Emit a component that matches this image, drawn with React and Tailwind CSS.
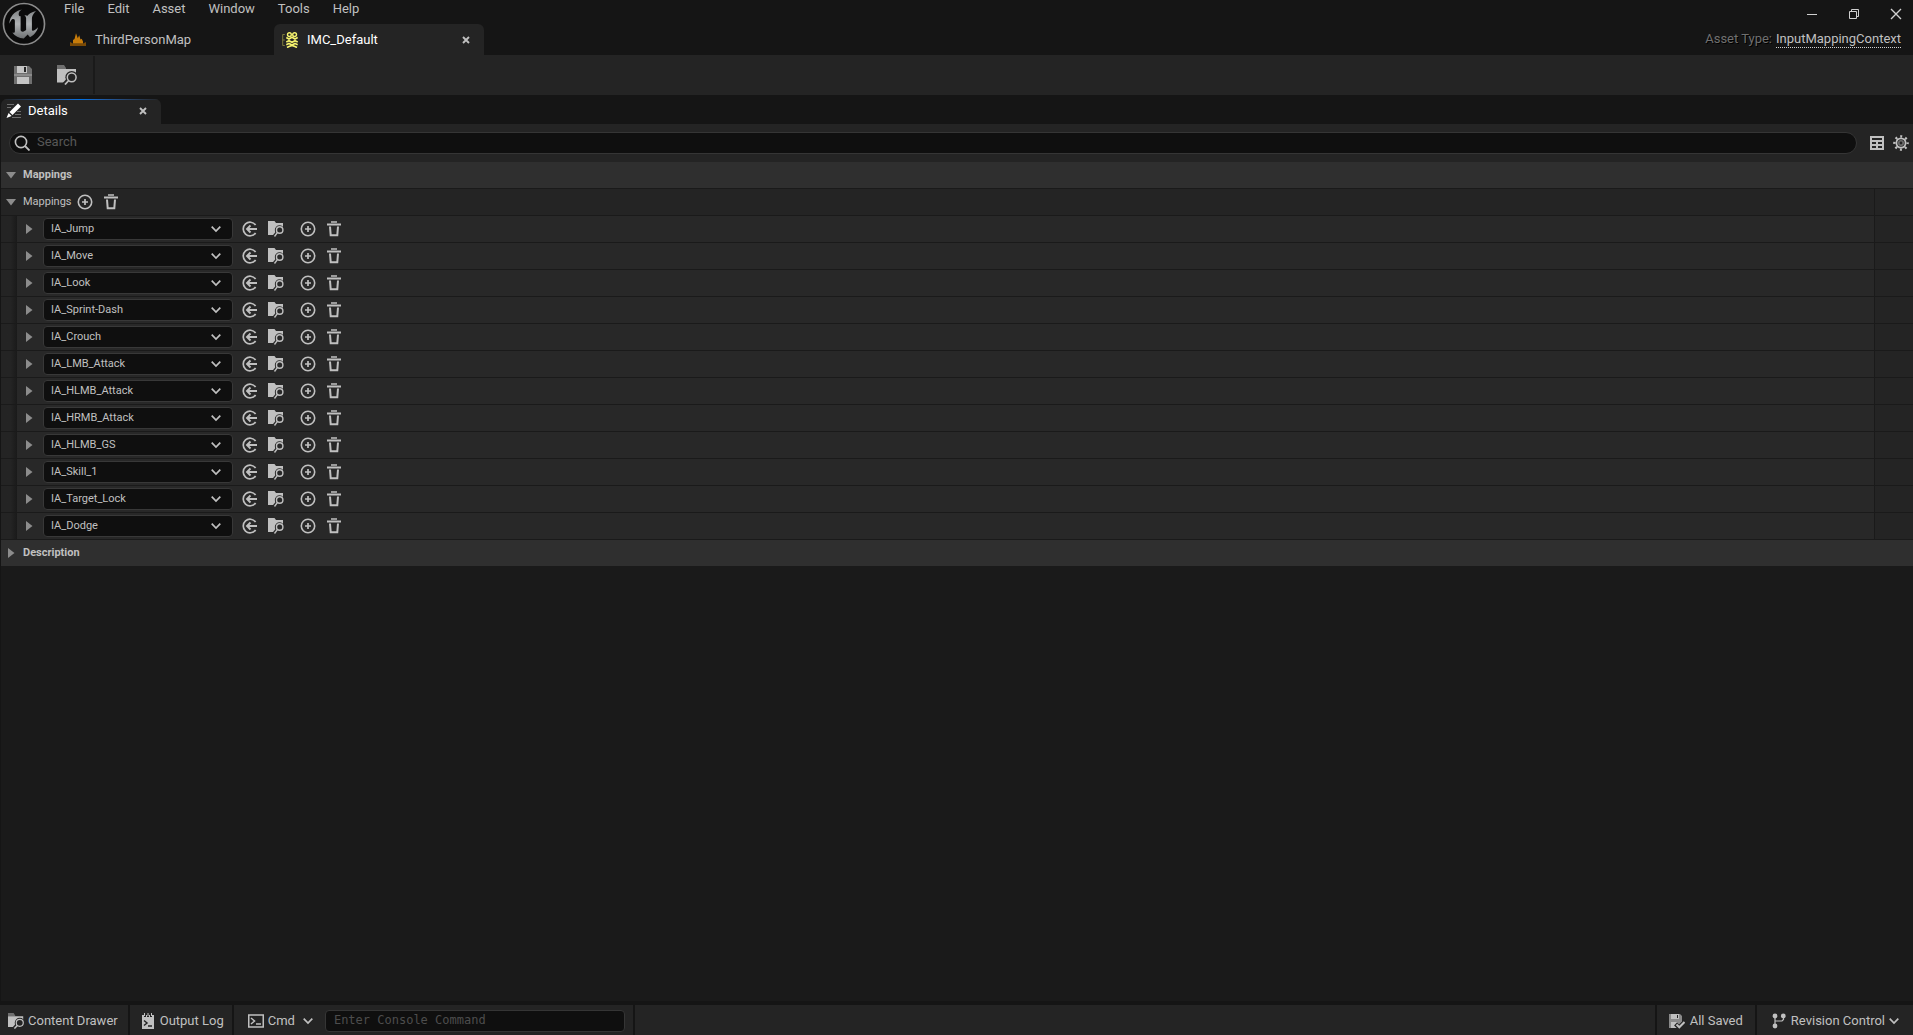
import React from 'react'
import clsx from 'clsx'

const MENUS = ['File', 'Edit', 'Asset', 'Window', 'Tools', 'Help']

const ACTIONS = [
  'IA_Jump',
  'IA_Move',
  'IA_Look',
  'IA_Sprint-Dash',
  'IA_Crouch',
  'IA_LMB_Attack',
  'IA_HLMB_Attack',
  'IA_HRMB_Attack',
  'IA_HLMB_GS',
  'IA_Skill_1',
  'IA_Target_Lock',
  'IA_Dodge',
]

/* ---------- icons ---------- */

function Svg({ size = 16, box = 16, children, className }) {
  return (
    <svg width={size} height={size} viewBox={`0 0 ${box} ${box}`} fill="none" className={clsx('shrink-0', className)} aria-hidden="true">
      {children}
    </svg>
  )
}

function Logo() {
  return (
    <svg width="44" height="44" viewBox="0 0 24 24" className="shrink-0" aria-hidden="true">
      <defs>
        <linearGradient id="logoFill" x1="0" y1="0" x2="0" y2="1">
          <stop offset="0" stopColor="#7d8082" />
          <stop offset="0.5" stopColor="#b0b3b5" />
          <stop offset="1" stopColor="#6d7072" />
        </linearGradient>
      </defs>
      <circle cx="12" cy="12" r="11.2" fill="#0b0b0b" stroke="#8b8b8b" strokeWidth="0.9" />
      <path
        fill="url(#logoFill)"
        transform="translate(-1 -1) scale(1.08)"
        d="M19.13 13.729c-.206.997-1.126 3.557-4.06 4.942l-1.179-1.325-1.988 2a7.338 7.338 0 01-5.804-2.978 2.859 2.859 0 00.65.123c.326.006.678-.114.678-.66v-5.394a.89.89 0 00-1.116-.89c-.92.212-1.656 2.509-1.656 2.509a7.304 7.304 0 012.528-5.597 7.408 7.408 0 013.73-1.721c-1.006.573-1.57 1.507-1.57 2.29 0 1.262.76 1.109.984.923v7.28a1.157 1.157 0 00.148.256 1.075 1.075 0 00.88.445c.76 0 1.747-.868 1.747-.868V9.172c0-.6-.452-1.324-.905-1.572 0 0 .838-.149 1.484.346a5.537 5.537 0 01.387-.425c1.508-1.48 2.929-1.902 4.112-2.112 0 0-2.151 1.69-2.151 3.96 0 1.687.043 5.801.043 5.801.799.771 1.986-.342 3.059-1.441z"
      />
    </svg>
  )
}

function MapIcon() {
  return (
    <Svg>
      <path d="M0 10l3 1.500h10L16 10v4H0z" fill="#7a4a06" />
      <path d="M3 11.500V8l1.500-1L6 1.300l1.800 5 1.400-3 1.300 4.200 1.200-.8L13 9.500v2z" fill="#c77c0a" />
    </Svg>
  )
}

function ContextIcon() {
  return (
    <Svg>
      <path d="M2.800 2.500H.7v11h2.100M.7 8h2.100" stroke="#7d7b3c" strokeWidth="1" />
      <g stroke="#f6f36e" strokeWidth="1.700">
        <path d="M4.300 5.500L7 7l3-1.700L13 7l2.700-1.500" />
        <path d="M4.300 10L7 8.700l3 1.600 3-1.600 2.700 1.300" />
        <path d="M4.300 12.700L7 11.500l3 1.500 3-1.500 2.700 1.200" />
        <path d="M5 15.500l2-1 3-1 3 1 2 1" />
      </g>
      <circle cx="7.400" cy="2.600" r="1.900" stroke="#f6f36e" strokeWidth="1.400" />
      <circle cx="12.600" cy="2.600" r="1.900" stroke="#f6f36e" strokeWidth="1.400" />
    </Svg>
  )
}

function SaveIcon({ size = 18 }) {
  return (
    <Svg size={size} box={18}>
      <path d="M0 0h15l3 3v15H0z" fill="#6f6f6f" />
      <path d="M3 0h10v7H3zM3 11h12v7H3z" fill="#c4c4c4" />
      <path d="M10 1h2v5h-2z" fill="#242424" />
      <path d="M0 8h18v2H0z" fill="#8a8a8a" />
    </Svg>
  )
}

function FolderSearch({ size = 20 }) {
  return (
    <Svg size={size} box={20}>
      <path d="M0 0h7l2 3v1H0z" fill="#6f6f6f" />
      <path d="M0 4h19v9l-9 4.500H0z" fill="#c0c0c0" />
      <circle cx="14.700" cy="12.300" r="6.300" fill="#242424" />
      <path d="M12 14L7 19.500" stroke="#242424" strokeWidth="4" />
      <circle cx="14.700" cy="12.300" r="4.400" stroke="#c0c0c0" strokeWidth="1.500" />
      <path d="M11.700 15.500L8 19.500" stroke="#c0c0c0" strokeWidth="1.800" />
    </Svg>
  )
}

function DetailsIcon() {
  return (
    <Svg>
      <path d="M1 1.500h7M1 4.500h4M11 8.500h4M9 11.500h6M6 14.500h9" stroke="#6e6e6e" />
      <path d="M12 .5l3 3-8.500 8.500-3-3z" fill="#fff" />
      <path d="M2.600 10l3 3L.5 15z" fill="#fff" />
    </Svg>
  )
}

function SearchIcon() {
  return (
    <Svg>
      <circle cx="7" cy="7" r="5.600" stroke="#c0c0c0" strokeWidth="1.600" />
      <path d="M11 11l4.500 4.500" stroke="#c0c0c0" strokeWidth="1.800" />
    </Svg>
  )
}

function TableIcon() {
  return (
    <Svg size={14} box={14}>
      <path fillRule="evenodd" d="M0 0h14v14H0zM2 2v2h10V2zM2 6v2h4V6zM8 6v2h4V6zM2 10v2h4v-2zM8 10v2h4v-2z" fill="#c0c0c0" />
    </Svg>
  )
}

function GearIcon() {
  return (
    <Svg>
      <circle cx="8" cy="8" r="6.600" stroke="#c0c0c0" strokeWidth="2.400" strokeDasharray="2 3.184" strokeDashoffset="1" />
      <circle cx="8" cy="8" r="4.600" stroke="#c0c0c0" strokeWidth="1.800" />
      <circle cx="8" cy="8" r="2.200" stroke="#6f6f6f" strokeWidth="1.600" />
    </Svg>
  )
}

function PlusIcon() {
  return (
    <Svg>
      <circle cx="8" cy="8" r="6.700" stroke="#c0c0c0" strokeWidth="1.600" />
      <path d="M5 8h6M8 5v6" stroke="#c0c0c0" strokeWidth="1.700" />
    </Svg>
  )
}

function TrashIcon() {
  return (
    <Svg>
      <path d="M5 1h6" stroke="#c0c0c0" strokeWidth="1.500" />
      <path d="M1 3.500h14" stroke="#c0c0c0" strokeWidth="2" />
      <path d="M4 5.500l.7 8.800h6.600l.7-8.800" stroke="#c0c0c0" strokeWidth="2" />
    </Svg>
  )
}

function UseIcon() {
  return (
    <Svg>
      <path d="M13.600 4.100a6.800 6.800 0 100 7.800" stroke="#c0c0c0" strokeWidth="1.700" />
      <path d="M15 8H5M8.500 4.500L5 8l3.500 3.500" stroke="#c0c0c0" strokeWidth="1.900" />
    </Svg>
  )
}

function BrowseIcon() {
  return (
    <Svg>
      <path d="M0 0h6.500L8 2h7v6l-7 6H0z" fill="#c0c0c0" />
      <circle cx="11.500" cy="9" r="4.700" fill="#282828" />
      <path d="M10 11l-3.500 4" stroke="#282828" strokeWidth="3.500" />
      <circle cx="11.700" cy="9" r="3.200" stroke="#c0c0c0" strokeWidth="1.400" />
      <path d="M9.500 11.400L6.500 15.500" stroke="#c0c0c0" strokeWidth="1.400" />
    </Svg>
  )
}

function LogIcon() {
  return (
    <Svg>
      <path d="M2 2h12v14H2z" fill="#c0c0c0" />
      <path d="M5 0v4M8 0v4M11 0v4" stroke="#242424" strokeWidth="2" />
      <path d="M4.500 0v3M8 0v3M11.500 0v3" stroke="#c0c0c0" strokeWidth="1" />
      <path d="M4 7.500L7 10l-3 2.500M8 13h4" stroke="#242424" strokeWidth="1.500" />
    </Svg>
  )
}

function CmdIcon() {
  return (
    <Svg>
      <path d="M.75 2h14.500v12H.75z" stroke="#c0c0c0" strokeWidth="1.500" />
      <path d="M3 5l3.500 3L3 11M8 11h5" stroke="#c0c0c0" strokeWidth="1.500" />
    </Svg>
  )
}

function SavedIcon() {
  return (
    <Svg>
      <path d="M0 1h11l2 2v6l-5 6H0z" fill="#8a8a8a" />
      <path d="M2 1h8v5H2zM2 9h6v6H2z" fill="#c0c0c0" />
      <path d="M8 2h1v3H8z" fill="#242424" />
      <path d="M6.500 11l3.500 3.500L16 8.500" stroke="#242424" strokeWidth="4" />
      <path d="M7.500 11.500l2.800 2.800L15.500 9" stroke="#c0c0c0" strokeWidth="2" />
    </Svg>
  )
}

function BranchIcon() {
  return (
    <Svg>
      <path d="M4 3v10M12.500 3v3.500L11 8H4" stroke="#c0c0c0" strokeWidth="1.200" />
      <circle cx="4" cy="3" r="2.400" fill="#c0c0c0" />
      <circle cx="12.300" cy="3" r="2.400" fill="#c0c0c0" />
      <circle cx="4" cy="13" r="2.400" fill="#c0c0c0" />
    </Svg>
  )
}

function Chevron({ className }) {
  return (
    <Svg size={10} box={10} className={className}>
      <path d="M.7 2.700L5 7l4.300-4.300" stroke="#c0c0c0" strokeWidth="1.700" />
    </Svg>
  )
}

function CloseX({ className }) {
  return (
    <Svg size={8} box={8} className={className}>
      <path d="M1 1l6 6M7 1L1 7" stroke="#c0c0c0" strokeWidth="1.900" />
    </Svg>
  )
}

function Arrow({ open }) {
  return (
    <Svg size={12} box={12}>
      <path d={open ? 'M1 3h10L6 9.500z' : 'M3 1v10l6.500-5z'} fill="#8c8c8c" />
    </Svg>
  )
}

/* ---------- pieces ---------- */

function IconButton({ label, children, className }) {
  return (
    <button type="button" aria-label={label} title={label} className={clsx('flex shrink-0 items-center justify-center', className)}>
      {children}
    </button>
  )
}

function TitleBar() {
  return (
    <header className="flex h-[55px] bg-[#151515]">
      <div className="flex w-[52px] shrink-0 items-start pt-[2px] pl-[2px]">
        <Logo />
      </div>
      <div className="min-w-0 flex-1">
        <nav className="flex h-6 items-start pl-px">
          {MENUS.map((m) => (
            <button key={m} type="button" className="pr-3 pl-[11px] leading-[18px]">
              {m}
            </button>
          ))}
        </nav>
        <div className="flex h-[31px]">
          <div className="flex w-[222px] items-center gap-[9px] pl-[18px]">
            <MapIcon />
            <button type="button">ThirdPersonMap</button>
          </div>
          <div className="flex w-[210px] items-center gap-[9px] rounded-t-md bg-[#242424] pl-2 text-white">
            <ContextIcon />
            <button type="button">IMC_Default</button>
            <IconButton label="Close tab" className="mr-[14px] ml-auto">
              <CloseX />
            </IconButton>
          </div>
        </div>
      </div>
      <div className="flex flex-col items-end">
        <div className="flex h-[28px] items-center">
          <IconButton label="Minimize" className="w-[42px]">
            <Svg size={10} box={10}>
              <path d="M0 5.500h10" stroke="#d0d0d0" />
            </Svg>
          </IconButton>
          <IconButton label="Restore" className="w-[42px]">
            <Svg size={10} box={10}>
              <path d="M.5 2.500h7v7h-7zM2.500 2.500v-2h7v7h-2" stroke="#d0d0d0" />
            </Svg>
          </IconButton>
          <IconButton label="Close" className="w-[38px] pl-1">
            <Svg size={12} box={12}>
              <path d="M1 1l10 10M11 1L1 11" stroke="#d0d0d0" strokeWidth="1.400" />
            </Svg>
          </IconButton>
        </div>
        <div className="flex gap-1 pt-[3px] pr-3 leading-4">
          <span className="text-[#707070] [text-shadow:1px_1px_0_#000]">Asset Type:</span>
          <a href="#asset-type" className="border-b border-dotted border-[#d0d0d0]">
            InputMappingContext
          </a>
        </div>
      </div>
    </header>
  )
}

function Toolbar() {
  return (
    <div className="flex h-10 bg-[#242424]">
      <div className="my-px flex items-center border-r-2 border-[#1a1a1a] pr-4 pl-[14px]">
        <IconButton label="Save">
          <SaveIcon />
        </IconButton>
        <IconButton label="Browse to asset" className="ml-[25px]">
          <FolderSearch />
        </IconButton>
      </div>
    </div>
  )
}

function PanelTabs() {
  return (
    <div className="flex h-[29px] items-end bg-[#151515]">
      <div className="h-[25px] w-40 overflow-hidden rounded-t-md bg-[#242424]">
        <div className="h-px bg-linear-to-r from-[#242424] via-[#0070e0] to-[#242424]" />
        <div className="flex h-[22px] items-center pl-[5px] text-white">
          <DetailsIcon />
          <button type="button" className="ml-[6px]">
            Details
          </button>
          <IconButton label="Close panel" className="mr-[14px] ml-auto">
            <CloseX />
          </IconButton>
        </div>
      </div>
    </div>
  )
}

function SearchBar() {
  return (
    <div className="flex h-[38px] items-center bg-[#242424] pr-1 pl-2">
      <label className="flex h-[22px] flex-1 items-center gap-[7px] rounded-full border border-[#353535] bg-[#0f0f0f] pl-1">
        <SearchIcon />
        <input
          type="text"
          aria-label="Search"
          placeholder="Search"
          className="h-5 min-w-0 flex-1 bg-transparent pb-1 outline-none placeholder:text-[#575757]"
        />
      </label>
      <IconButton label="Property matrix" className="ml-[13px]">
        <TableIcon />
      </IconButton>
      <IconButton label="Settings" className="ml-[9px]">
        <GearIcon />
      </IconButton>
    </div>
  )
}

function Category({ title, open }) {
  return (
    <button
      type="button"
      aria-expanded={open}
      className="flex h-[27px] w-full items-center gap-[6px] border-b border-[#1a1a1a] bg-[#2f2f2f] pl-1 text-[11px] font-bold"
    >
      <Arrow open={open} />
      {title}
    </button>
  )
}

function Row({ nested, children }) {
  return (
    <div className="flex h-[27px] border-b border-[#1a1a1a] bg-[#242424]">
      {nested && <div className="w-4 shrink-0 bg-linear-to-r from-[#242424] from-60% to-[#1a1a1a]" />}
      <div className={clsx('flex min-w-0 flex-1 items-center', nested && 'bg-[#282828]')}>{children}</div>
      <div className="w-[39px] shrink-0 border-l border-[#1a1a1a]" />
    </div>
  )
}

function ActionRow({ name }) {
  return (
    <Row nested>
      <IconButton label={`Expand ${name}`} className="ml-[6px]">
        <Arrow />
      </IconButton>
      <div className="relative ml-2 shrink-0">
        <select
          aria-label="Input action"
          defaultValue={name}
          className="block h-[22px] w-[190px] appearance-none rounded border border-[#383838] bg-[#0f0f0f] pl-[7px] text-[11px] outline-none"
        >
          {ACTIONS.map((a) => (
            <option key={a}>{a}</option>
          ))}
        </select>
        <Chevron className="pointer-events-none absolute top-[6px] right-3" />
      </div>
      <div className="flex gap-[10px] pl-[9px]">
        <IconButton label="Use selected asset">
          <UseIcon />
        </IconButton>
        <IconButton label="Browse to asset">
          <BrowseIcon />
        </IconButton>
      </div>
      <div className="flex gap-[10px] pl-4">
        <IconButton label="Add binding">
          <PlusIcon />
        </IconButton>
        <IconButton label="Remove mapping">
          <TrashIcon />
        </IconButton>
      </div>
    </Row>
  )
}

function Details() {
  return (
    <main className="flex-1 bg-[#1a1a1a]">
      <Category title="Mappings" open />
      <Row>
        <button type="button" aria-expanded="true" className="flex items-center gap-[6px] pl-1 text-[11px]">
          <Arrow open />
          Mappings
        </button>
        <div className="flex gap-[10px] pl-[5px]">
          <IconButton label="Add mapping">
            <PlusIcon />
          </IconButton>
          <IconButton label="Remove all mappings">
            <TrashIcon />
          </IconButton>
        </div>
      </Row>
      {ACTIONS.map((name) => (
        <ActionRow key={name} name={name} />
      ))}
      <Category title="Description" open={false} />
    </main>
  )
}

function StatusBar() {
  const item = 'flex items-center border-[#151515] pt-[2px]'
  return (
    <footer className="flex h-[34px] border-t-4 border-[#151515] bg-[#242424]">
      <button type="button" className={clsx(item, 'gap-1 border-r-2 pr-[10px] pl-2')}>
        <FolderSearch size={16} />
        Content Drawer
      </button>
      <button type="button" className={clsx(item, 'gap-1 border-r-2 pr-2 pl-[10px]')}>
        <LogIcon />
        Output Log
      </button>
      <div className={clsx(item, 'border-r-2 pr-2 pl-[14px]')}>
        <button type="button" className="flex items-center gap-1">
          <CmdIcon />
          Cmd
          <Chevron className="ml-1" />
        </button>
        <input
          type="text"
          aria-label="Console command"
          placeholder="Enter Console Command"
          className="ml-3 h-[22px] w-[300px] rounded border border-[#353535] bg-[#0f0f0f] pb-[2px] pl-2 font-['DejaVu_Sans_Mono',monospace] text-xs outline-none placeholder:text-[#4d4d4d]"
        />
      </div>
      <button type="button" className={clsx(item, 'ml-auto gap-[5px] border-l-2 pr-3 pl-3')}>
        <SavedIcon />
        All Saved
      </button>
      <button type="button" className={clsx(item, 'gap-1 border-l-2 pr-[14px] pl-[14px]')}>
        <BranchIcon />
        Revision Control
        <Chevron />
      </button>
    </footer>
  )
}

export default function App() {
  return (
    <div className="flex min-h-screen flex-col bg-[#151515] font-[Roboto,sans-serif] text-[13px] text-[#c0c0c0]">
      <TitleBar />
      <Toolbar />
      <div className="flex flex-1 flex-col pl-px">
        <PanelTabs />
        <SearchBar />
        <Details />
      </div>
      <StatusBar />
    </div>
  )
}
